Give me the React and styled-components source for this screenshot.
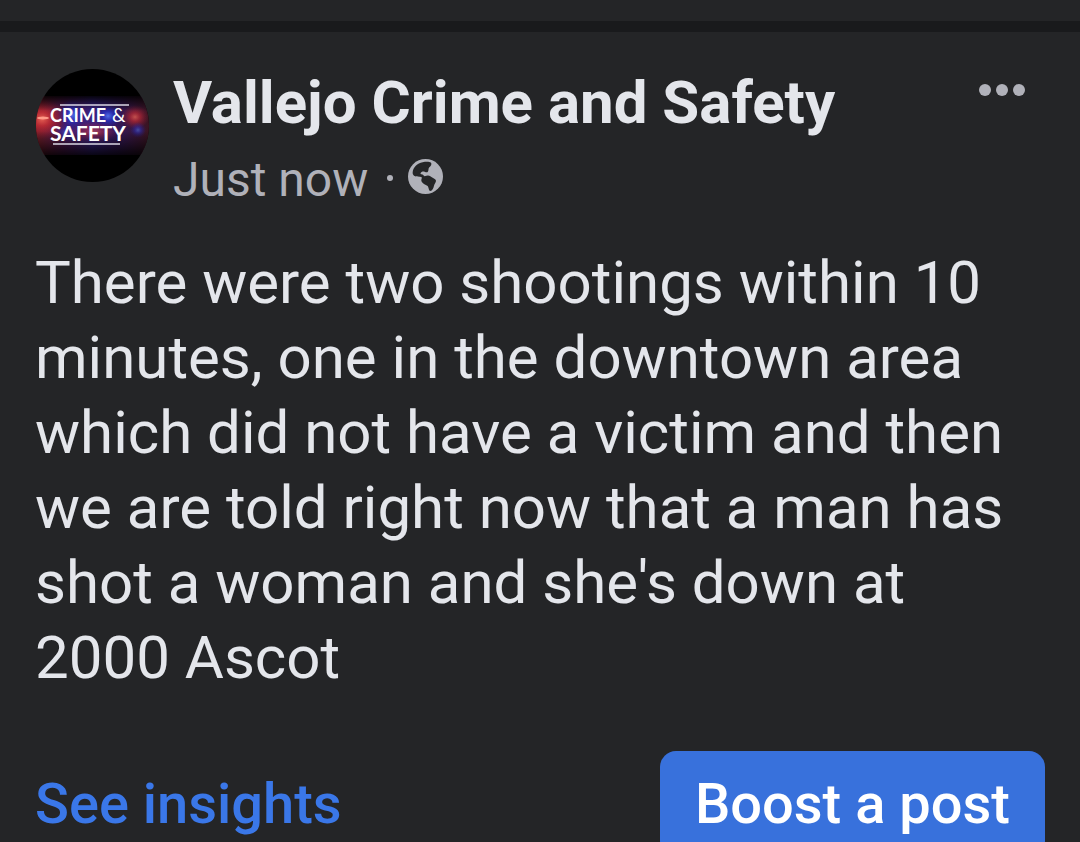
import React from 'react';
import styled, { createGlobalStyle } from 'styled-components';

const GlobalStyle = createGlobalStyle`
  html {
    scrollbar-width: none;
  }
  body {
    margin: 0;
    background-color: #242527;
    color: #e4e6eb;
    font-family: Roboto, "Liberation Sans", sans-serif;
  }
`;

const Feed = styled.main`
  padding-top: 21px;
`;

const Post = styled.article`
  border-top: 11px solid #191a1c;
  padding: 37px 35px 36px;
`;

const Header = styled.header`
  display: flex;
  align-items: flex-start;
  gap: 24px;
`;

const Avatar = styled.svg`
  flex: none;
  width: 114px;
  height: 114px;
`;

const HeaderText = styled.div`
  flex: 1;
  min-width: 0;
`;

const Title = styled.h1`
  margin: 0;
  font-size: 60px;
  line-height: 68px;
  font-weight: 700;
`;

const Meta = styled.div`
  display: flex;
  align-items: center;
  margin-top: 13px;
  color: #b0b1b9;
  font-size: 48px;
  line-height: 60px;
`;

const Dot = styled.span`
  width: 6px;
  height: 6px;
  margin: 0 15px 4px 19px;
  border-radius: 50%;
  background-color: currentColor;
`;

const Globe = styled.svg`
  width: 35px;
  height: 35px;
  margin-bottom: 7px;
`;

const MenuButton = styled.button`
  display: flex;
  gap: 5px;
  margin-right: 20px;
  padding: 15px 0;
  border: 0;
  background: transparent;
  color: #b0b1b9;
`;

const MenuDot = styled.span`
  width: 12px;
  height: 12px;
  border-radius: 50%;
  background-color: currentColor;
`;

const Body = styled.p`
  margin: 35px 0 0;
  font-size: 60px;
  line-height: 75px;
`;

const Footer = styled.footer`
  display: flex;
  align-items: center;
  justify-content: space-between;
  margin-top: 56px;
`;

const InsightsLink = styled.a`
  color: #3a77e8;
  font-size: 56px;
  line-height: 66px;
  font-weight: 500;
  text-decoration: none;
`;

const BoostButton = styled.button`
  padding: 20px 35px;
  border: 0;
  border-radius: 16px;
  background-color: #3871dc;
  color: #fff;
  font-family: inherit;
  font-size: 56px;
  line-height: 66px;
  font-weight: 500;
`;

const PageAvatar = () => (
  <Avatar viewBox="-1 0 114 114" role="img" aria-label="Crime & Safety">
    <defs>
      <clipPath id="round"><circle cx="56.5" cy="56.5" r="56.5" /></clipPath>
      <linearGradient id="band" x1="0" y1="0" x2="1" y2="0">
        <stop offset="0" stopColor="#7d2129" />
        <stop offset="0.25" stopColor="#5a1c5c" />
        <stop offset="0.5" stopColor="#3d2690" />
        <stop offset="0.75" stopColor="#3a1a5c" />
        <stop offset="1" stopColor="#401624" />
      </linearGradient>
      <linearGradient id="shade" x1="0" y1="0" x2="0" y2="1">
        <stop offset="0" stopColor="#000" stopOpacity="0.9" />
        <stop offset="0.25" stopColor="#000" stopOpacity="0.1" />
        <stop offset="0.6" stopColor="#000" stopOpacity="0.1" />
        <stop offset="1" stopColor="#000" stopOpacity="0.85" />
      </linearGradient>
      <radialGradient id="red">
        <stop offset="0" stopColor="#ff6a5c" />
        <stop offset="0.35" stopColor="#d8303a" stopOpacity="0.85" />
        <stop offset="1" stopColor="#b01c30" stopOpacity="0" />
      </radialGradient>
      <radialGradient id="blue">
        <stop offset="0" stopColor="#5a7cff" />
        <stop offset="0.4" stopColor="#2c35d8" stopOpacity="0.8" />
        <stop offset="1" stopColor="#2222a8" stopOpacity="0" />
      </radialGradient>
    </defs>
    <g clipPath="url(#round)">
      <rect width="113" height="113" fill="#000" />
      <rect y="27" width="113" height="59" fill="url(#band)" />
      <ellipse cx="6" cy="50" rx="24" ry="20" fill="url(#red)" />
      <ellipse cx="99" cy="48" rx="14" ry="12" fill="url(#red)" opacity="0.8" />
      <ellipse cx="58" cy="63" rx="24" ry="11" fill="url(#red)" opacity="0.6" />
      <ellipse cx="36" cy="46" rx="14" ry="16" fill="url(#blue)" />
      <ellipse cx="72" cy="47" rx="14" ry="12" fill="url(#blue)" />
      <ellipse cx="102" cy="61" rx="8" ry="8" fill="url(#blue)" opacity="0.6" />
      <ellipse cx="30" cy="64" rx="12" ry="10" fill="url(#blue)" opacity="0.6" />
      <rect y="27" width="113" height="59" fill="url(#shade)" />
      <ellipse cx="7" cy="49" rx="6" ry="1.5" fill="#ff9a88" />
    </g>
    <path d="M24 36H93M17 75H84" stroke="#d9d6e2" strokeWidth="1.5" />
    <g fill="#fff" fontFamily="Lato, sans-serif" fontWeight="700">
      <text x="14" y="53" fontSize="18">CRIME</text>
      <text x="76" y="53" fontSize="19" fontWeight="400">&amp;</text>
      <text x="14" y="72" fontSize="21">SAFETY</text>
    </g>
  </Avatar>
);

const PublicIcon = () => (
  <Globe viewBox="0 0 105 105" role="img" aria-label="Public">
    <circle cx="52.5" cy="52.5" r="52.5" fill="#b0b1b9" />
    <path
      fill="#242527"
      d="M14 40C15 25 28 13 44 10C54 8 64 8 69 11C72 15 69 21 64 25C60 29 63 35 59 39C55 42 49 36 42 38C37 40 36 45 40 46C46 46 46 50 50 52C56 49 63 48 67 52C72 57 82 58 84 65C84 71 79 74 78 80C76 88 73 95 67 96C61 94 63 86 59 81C53 76 42 74 40 65C39 60 44 57 40 54C34 51 25 54 18 50C14 47 14 44 14 40Z"
    />
  </Globe>
);

const App = () => (
  <>
    <GlobalStyle />
    <Feed>
      <Post>
        <Header>
          <PageAvatar />
          <HeaderText>
            <Title>Vallejo Crime and Safety</Title>
            <Meta>
              <span>Just now</span>
              <Dot />
              <PublicIcon />
            </Meta>
          </HeaderText>
          <MenuButton type="button" aria-label="More options">
            <MenuDot />
            <MenuDot />
            <MenuDot />
          </MenuButton>
        </Header>
        <Body>
          There were two shootings within 10 minutes, one in the downtown area
          which did not have a victim and then we are told right now that a man
          has shot a woman and she's down at 2000 Ascot
        </Body>
        <Footer>
          <InsightsLink href="#insights">See insights</InsightsLink>
          <BoostButton type="button">Boost a post</BoostButton>
        </Footer>
      </Post>
    </Feed>
  </>
);

export default App;
